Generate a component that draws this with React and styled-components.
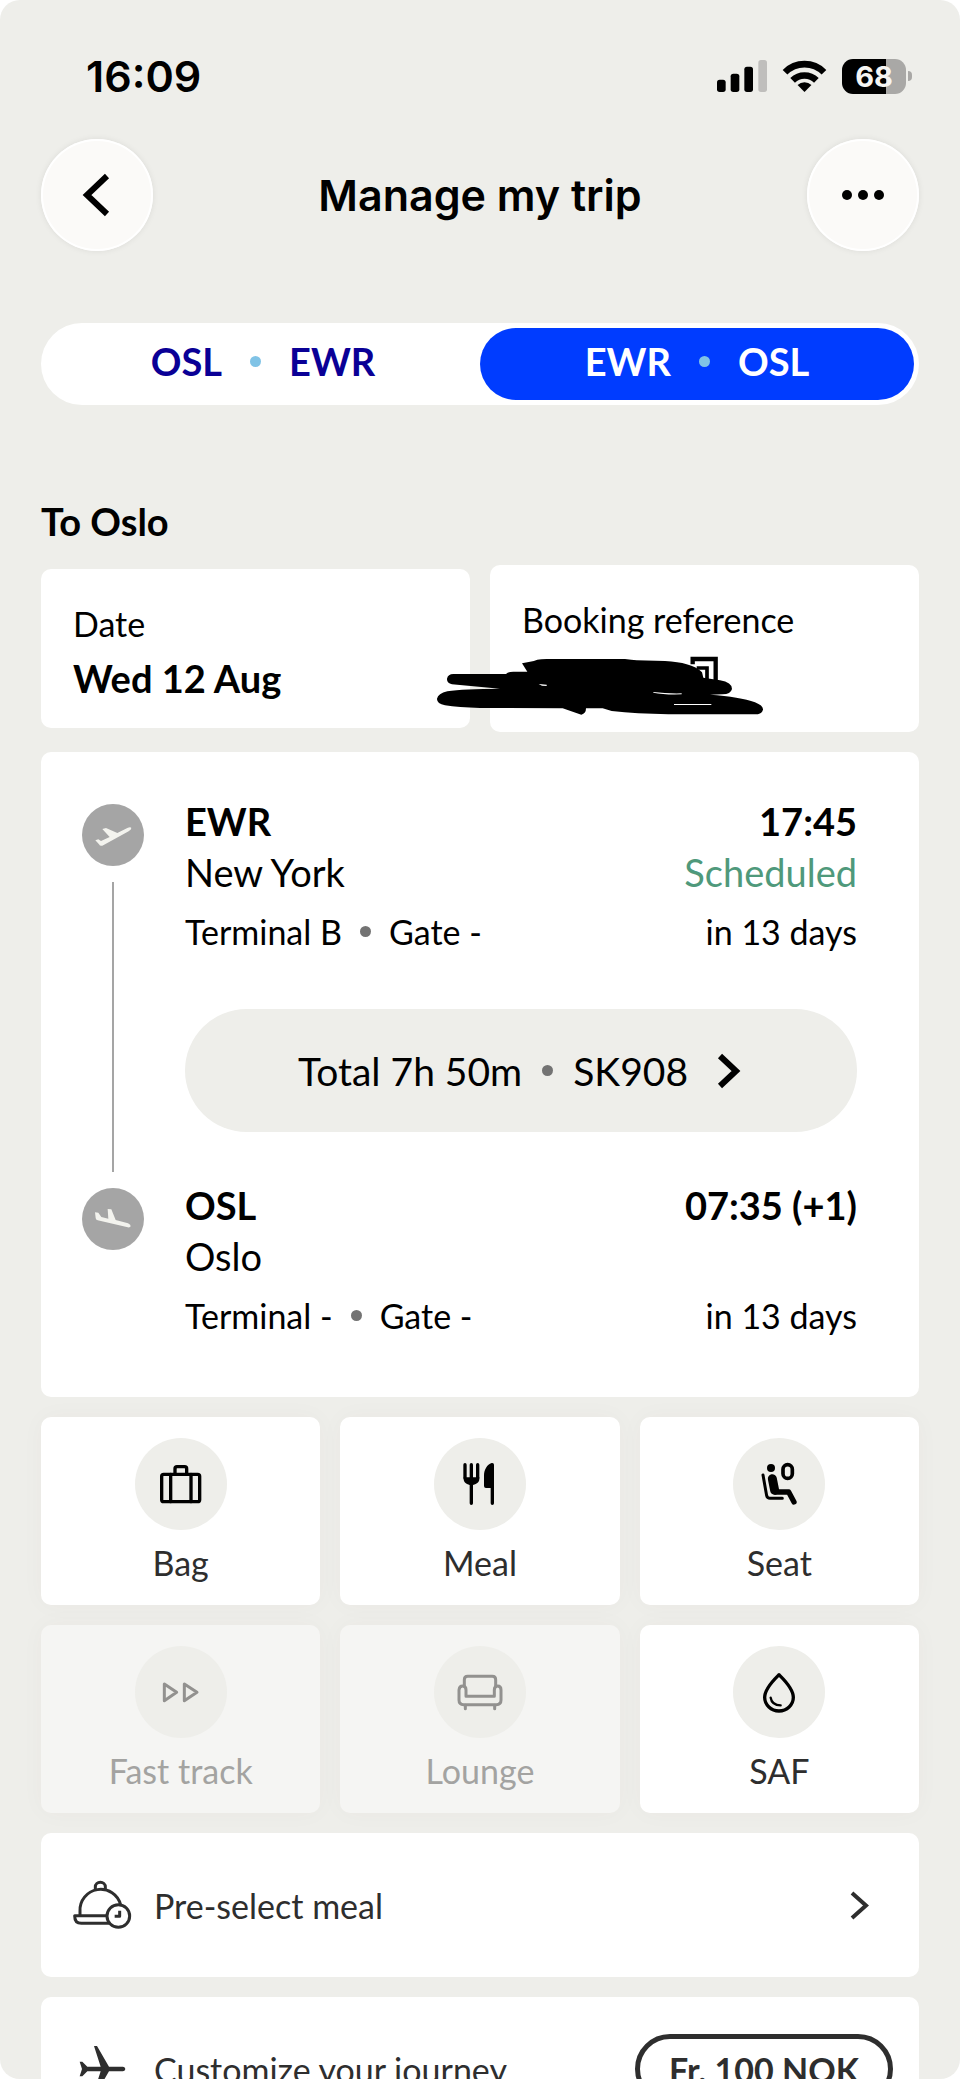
import React, { useState } from 'react'
import styled, { createGlobalStyle } from 'styled-components'

const GlobalStyle = createGlobalStyle`
  * {
    box-sizing: border-box;
  }
  body {
    margin: 0;
    background: #ffffff;
    color: #000000;
    font-family: Lato, 'Open Sans', sans-serif;
  }
  button {
    font: inherit;
    color: inherit;
    border: none;
    padding: 0;
    background: none;
    cursor: pointer;
  }
  h1, h2, p {
    margin: 0;
  }
  svg {
    display: block;
    overflow: visible;
  }
`

const Screen = styled.div`
  height: 100vh;
  overflow-y: auto;
  scrollbar-width: none;
  background: #eeeeea;
  border-radius: 20px;
`

const StatusBar = styled.div`
  display: flex;
  align-items: center;
  justify-content: space-between;
  height: 48px;
  margin-top: 52px;
  padding: 0 54px 0 86px;
  font-family: Inter, sans-serif;
`

const Clock = styled.span`
  font-size: 43px;
  font-weight: 600;
`

const StatusIcons = styled.div`
  display: flex;
  align-items: center;
  gap: 16px;
`

const Battery = styled.div`
  position: relative;
  display: flex;
  align-items: center;
  justify-content: center;
  width: 64px;
  height: 35px;
  border-radius: 11px;
  background: linear-gradient(to right, #000000 68%, #a9a8a6 68%);
  color: #f6f5f2;
  font-size: 29px;
  font-weight: 700;

  &::after {
    content: '';
    position: absolute;
    right: -6px;
    width: 4px;
    height: 10px;
    border-radius: 0 4px 4px 0;
    background: #a9a8a6;
  }
`

const Header = styled.header`
  display: flex;
  align-items: center;
  justify-content: space-between;
  margin-top: 39px;
  padding: 0 41px;
`

const RoundButton = styled.button`
  display: flex;
  align-items: center;
  justify-content: center;
  width: 112px;
  height: 112px;
  border-radius: 50%;
  background: #fbfaf8;
  box-shadow: inset 0 0 0 2px #ffffff, 0 0 6px rgba(0, 0, 0, 0.08);
`

const Title = styled.h1`
  font-family: Inter, sans-serif;
  font-size: 43px;
  font-weight: 600;
  line-height: 48px;
`

const Content = styled.main`
  display: flex;
  flex-direction: column;
  gap: 20px;
  padding: 72px 41px 0;
`

const Segments = styled.div`
  display: flex;
  height: 82px;
  padding: 5px;
  border-radius: 41px;
  background: #ffffff;
`

const Segment = styled.button`
  flex: 1;
  display: flex;
  align-items: center;
  justify-content: center;
  gap: 28px;
  border-radius: 36px;
  padding-bottom: 6px;
  font-size: 38px;
  font-weight: 700;
  line-height: 48px;
  color: ${({ $active }) => ($active ? '#ffffff' : '#0a0096')};
  background: ${({ $active }) => ($active ? '#003cff' : 'transparent')};
`

const Dot = styled.span`
  flex: none;
  width: 11px;
  height: 11px;
  border-radius: 50%;
  background: ${({ $color }) => $color || '#737373'};
`

const Heading = styled.h2`
  margin-top: 72px;
  font-size: 38px;
  font-weight: 700;
  line-height: 48px;
`

const InfoCards = styled.div`
  display: grid;
  grid-template-columns: 1fr 1fr;
  align-items: center;
  gap: 20px;
`

const InfoCard = styled.div`
  position: relative;
  min-height: ${({ $tall }) => ($tall ? '167px' : '159px')};
  padding: 28px 32px 20px;
  border-radius: 10px;
  background: #ffffff;
  font-size: 34px;
  line-height: 54px;
`

const InfoValue = styled.p`
  font-size: 38px;
  font-weight: 700;
`

const Scribble = styled.svg`
  position: absolute;
  left: -70px;
  top: 74px;
  width: 360px;
  height: 90px;
`

const FlightCard = styled.section`
  display: flex;
  gap: 41px;
  padding: 44px 62px 56px 41px;
  border-radius: 10px;
  background: #ffffff;
`

const Timeline = styled.div`
  display: flex;
  flex-direction: column;
  align-items: center;
  gap: 16px;
  padding: 8px 0 91px;
`

const Stop = styled.div`
  display: flex;
  align-items: center;
  justify-content: center;
  width: 62px;
  height: 62px;
  border-radius: 50%;
  background: #a5a5a5;
`

const Track = styled.div`
  flex: 1;
  width: 2px;
  background: #a5a5a5;
`

const FlightBody = styled.div`
  flex: 1;
`

const Line = styled.div`
  display: flex;
  align-items: center;
  justify-content: space-between;
  min-height: 51px;
  font-size: 38px;
  font-weight: ${({ $bold }) => ($bold ? 700 : 400)};
  line-height: 51px;
`

const SmallLine = styled(Line)`
  margin-top: 8px;
  font-size: 34px;
`

const Gate = styled.span`
  display: flex;
  align-items: center;
  gap: 18px;
`

const Status = styled.span`
  color: #4f997b;
`

const DurationButton = styled.button`
  display: flex;
  align-items: center;
  justify-content: center;
  gap: 20px;
  width: 100%;
  height: 123px;
  margin: 52px 0 48px;
  padding-right: 8px;
  border-radius: 62px;
  background: #eeeeea;
  font-size: 39px;

  svg {
    margin-left: 12px;
  }
`

const Tiles = styled.div`
  display: grid;
  grid-template-columns: repeat(3, 1fr);
  gap: 20px;
`

const Tile = styled.button`
  display: flex;
  flex-direction: column;
  align-items: center;
  gap: 12px;
  height: 188px;
  padding-top: 21px;
  border-radius: 10px;
  background: #ffffff;
  box-shadow: 0 0 24px rgba(80, 40, 20, 0.03);
  color: #2e2e2e;
  font-size: 34px;
  line-height: 42px;

  &:disabled {
    background: #f5f5f3;
    color: #a3a3a1;
    cursor: default;
  }
`

const TileIcon = styled.span`
  display: flex;
  align-items: center;
  justify-content: center;
  width: 92px;
  height: 92px;
  border-radius: 50%;
  background: #eeeeea;
  color: ${({ $muted }) => ($muted ? '#92918f' : '#000000')};
`

const Row = styled.div`
  display: flex;
  align-items: center;
  gap: 23px;
  min-height: 144px;
  padding: 0 26px 0 32px;
  border-radius: 10px;
  background: #ffffff;
  color: #2e2e2e;
  font-size: 34px;
`

const RowIcon = styled.span`
  display: flex;
  justify-content: center;
  width: 58px;
`

const RowLabel = styled.a`
  flex: 1;
  color: inherit;
  text-decoration: none;
`

const RowArrow = styled.span`
  padding-right: 27px;
`

const PriceButton = styled.button`
  height: 70px;
  padding: 0 29px;
  border: 5px solid #2e2e2e;
  border-radius: 35px;
  font-weight: 700;
`

function Chevron({ width, height, stroke, left }) {
  const points = left
    ? `${width},0 0,${height / 2} ${width},${height}`
    : `0,0 ${width},${height / 2} 0,${height}`
  return (
    <svg width={width} height={height} fill="none" stroke="currentColor" strokeWidth={stroke}>
      <polyline points={points} />
    </svg>
  )
}

function SignalIcon() {
  return (
    <svg width="50" height="32" viewBox="0 0 150 96">
      <rect x="0" y="59" width="26" height="37" rx="8" />
      <rect x="41" y="41" width="26" height="55" rx="8" />
      <rect x="82" y="20" width="26" height="76" rx="8" />
      <rect x="124" y="0" width="26" height="96" rx="8" fill="#bfbebc" />
    </svg>
  )
}

function WifiIcon() {
  return (
    <svg width="43" height="32" viewBox="278 58 130 97" fill="none" stroke="#000" strokeWidth="20">
      <path d="M284 95A83 83 0 0 1 402 95" />
      <path d="M307 120A51 51 0 0 1 379 120" />
      <path d="M343 155L322 134A31 31 0 0 1 364 134Z" fill="#000" stroke="none" />
    </svg>
  )
}

// Shared canvas for the icons of the tiles
function TileSvg({ children, stroke = 10 }) {
  return (
    <svg
      width="44"
      height="44"
      viewBox="0 0 132 132"
      fill="none"
      stroke="currentColor"
      strokeWidth={stroke}
      strokeLinecap="round"
      strokeLinejoin="round"
    >
      {children}
    </svg>
  )
}

const icons = {
  bag: (
    <TileSvg>
      <rect x="8" y="37" width="114" height="82" rx="6" />
      <path d="M35 37v82M96 37v82M48 36V20q0-6 6-6h23q6 0 6 6v16" />
    </TileSvg>
  ),
  meal: (
    <TileSvg>
      <path d="M21 8v40M40 8v116M59 8v40" />
      <path d="M17 46h47v5c0 11-11 18-24 18s-23-7-23-18z" fill="currentColor" stroke="none" />
      <path
        d="M108 8q0-6-7-5C87 7 78 24 78 40v32q0 6 6 6h14v46a5 5 0 0 0 10 0z"
        fill="currentColor"
        stroke="none"
      />
    </TileSvg>
  ),
  seat: (
    <TileSvg>
      <circle cx="42" cy="18" r="12" fill="currentColor" stroke="none" />
      <rect x="78" y="8" width="28" height="41" rx="14" strokeWidth="11" />
      <path d="M18 39l11 62q2 8 10 8h37" strokeWidth="9" />
      <path d="M46 50l7 35" strokeWidth="27" />
      <path d="M55 90h40l16 30" strokeWidth="16" />
    </TileSvg>
  ),
  fast: (
    <TileSvg stroke={9}>
      <path d="M16 42v50l37-25zM76 42v50l38-25z" />
    </TileSvg>
  ),
  lounge: (
    <TileSvg stroke={9}>
      <path d="M19 47V29q0-10 10-10h74q10 0 10 10v18" />
      <path d="M24 79V60q0-12-10-12T3 60v30q0 14 14 14h98q14 0 14-14V60q0-12-10-12t-10 12v19z" />
      <path d="M22 106v10M110 106v10" />
    </TileSvg>
  ),
  drop: (
    <TileSvg>
      <path d="M66 14C56 24 23 55 23 82a43 41 0 0 0 86 0C109 55 76 24 66 14z" />
      <path d="M41 83c2 14 12 23 30 23" strokeWidth="7" />
    </TileSvg>
  ),
}

const tiles = [
  { label: 'Bag', icon: 'bag' },
  { label: 'Meal', icon: 'meal' },
  { label: 'Seat', icon: 'seat' },
  { label: 'Fast track', icon: 'fast', disabled: true },
  { label: 'Lounge', icon: 'lounge', disabled: true },
  { label: 'SAF', icon: 'drop' },
]

const routes = [
  ['OSL', 'EWR'],
  ['EWR', 'OSL'],
]

function FlightStop({ code, time, city, status, terminal, gate, days }) {
  return (
    <div>
      <Line $bold>
        <span>{code}</span>
        <span>{time}</span>
      </Line>
      <Line>
        <span>{city}</span>
        <Status>{status}</Status>
      </Line>
      <SmallLine>
        <Gate>
          Terminal {terminal}
          <Dot />
          Gate {gate}
        </Gate>
        <span>{days}</span>
      </SmallLine>
    </div>
  )
}

export default function App() {
  const [route, setRoute] = useState(1)

  return (
    <Screen>
      <GlobalStyle />
      <StatusBar>
        <Clock>16:09</Clock>
        <StatusIcons>
          <SignalIcon />
          <WifiIcon />
          <Battery>68</Battery>
        </StatusIcons>
      </StatusBar>

      <Header>
        <RoundButton aria-label="Back">
          <Chevron width={20} height={38} stroke={6} left />
        </RoundButton>
        <Title>Manage my trip</Title>
        <RoundButton aria-label="More">
          <svg width="44" height="12">
            <circle cx="6" cy="6" r="5" />
            <circle cx="22" cy="6" r="5" />
            <circle cx="38" cy="6" r="5" />
          </svg>
        </RoundButton>
      </Header>

      <Content>
        <Segments>
          {routes.map(([from, to], i) => (
            <Segment key={from} $active={route === i} onClick={() => setRoute(i)}>
              {from}
              <Dot $color="#80c3e6" />
              {to}
            </Segment>
          ))}
        </Segments>

        <Heading>To Oslo</Heading>

        <InfoCards>
          <InfoCard>
            <p>Date</p>
            <InfoValue>Wed 12 Aug</InfoValue>
          </InfoCard>
          <InfoCard $tall>
            <p>Booking reference</p>
            <Scribble viewBox="0 0 1080 270">
              <g fill="none" stroke="#000" strokeWidth="13">
                <path d="M818 76V60H887V126" />
                <path d="M830 87H861V122" strokeWidth="11" />
              </g>
              <path d="M306 73L330 68Q342 67 352 62Q362 60 380 60H615Q635 62 650 64L735 66Q775 68 800 76Q830 84 846 100L850 116L900 124Q936 130 936 150Q932 166 908 166L870 167Q960 173 1005 190Q1030 200 1029 212Q1026 226 1004 226L745 226Q650 224 575 216L548 208L498 208Q498 224 484 227L428 208L180 207Q115 205 75 199Q50 194 51 179Q54 164 82 157Q130 149 240 149L96 136Q80 132 81 119Q84 105 100 105L258 105Q264 98 280 98L322 98Z" />
              <g fill="#fff">
                <path d="M356 135L380 137V141L366 140Z" />
                <path d="M700 159Q740 164 785 163V166Q735 168 700 161Z" />
                <path d="M762 195H874V198H762Z" />
              </g>
            </Scribble>
          </InfoCard>
        </InfoCards>

        <FlightCard>
          <Timeline>
            <Stop>
              <svg width="40" height="40" viewBox="0 0 120 120" fill="#f3f3ee">
                <path d="M7 76l9-3 8 5 26-12-22-24 11-3 34 15 30-15q10-4 12 0 1 4-8 10L28 92q-7 2-10-4z" />
              </svg>
            </Stop>
            <Track />
            <Stop>
              <svg width="40" height="40" viewBox="0 0 120 120" fill="#f3f3ee">
                <path d="M6 40l10 1 9 13 21 5-2-29 11 1 13 32 37 10q9 4 8 9-2 5-12 2L14 64q-6-2-6-7z" />
              </svg>
            </Stop>
          </Timeline>
          <FlightBody>
            <FlightStop
              code="EWR"
              time="17:45"
              city="New York"
              status="Scheduled"
              terminal="B"
              gate="-"
              days="in 13 days"
            />
            <DurationButton>
              Total 7h 50m
              <Dot />
              SK908
              <Chevron width={16} height={30} stroke={6} />
            </DurationButton>
            <FlightStop
              code="OSL"
              time="07:35 (+1)"
              city="Oslo"
              terminal="-"
              gate="-"
              days="in 13 days"
            />
          </FlightBody>
        </FlightCard>

        <Tiles>
          {tiles.map((tile) => (
            <Tile key={tile.label} disabled={tile.disabled}>
              <TileIcon $muted={tile.disabled}>{icons[tile.icon]}</TileIcon>
              {tile.label}
            </Tile>
          ))}
        </Tiles>

        <Row>
          <RowIcon>
            <svg
              width="58"
              height="48"
              viewBox="0 0 174 144"
              fill="none"
              stroke="currentColor"
              strokeWidth="9"
              strokeLinejoin="round"
            >
              <path d="M67 29V18a15 14 0 0 1 30 0v11" />
              <path d="M21 103V91A62 62 0 0 1 143 72" />
              <path d="M104 104H5q0 23 20 23h84" />
              <circle cx="136" cy="105" r="34" />
              <path d="M140 89v17h-15" />
            </svg>
          </RowIcon>
          <RowLabel href="#meal">Pre-select meal</RowLabel>
          <RowArrow>
            <Chevron width={14} height={25} stroke={4} />
          </RowArrow>
        </Row>

        <Row>
          <RowIcon>
            <svg width="48" height="48" viewBox="0 0 144 144" fill="currentColor">
              <path d="M48 3h9l36 62h42q7 1 7 7t-7 7H93l-36 62h-9l20-62H28L13 94H5l7-22-7-22h8l15 15h40z" />
            </svg>
          </RowIcon>
          <RowLabel href="#journey">Customize your journey</RowLabel>
          <PriceButton>Fr. 100 NOK</PriceButton>
        </Row>
      </Content>
    </Screen>
  )
}
